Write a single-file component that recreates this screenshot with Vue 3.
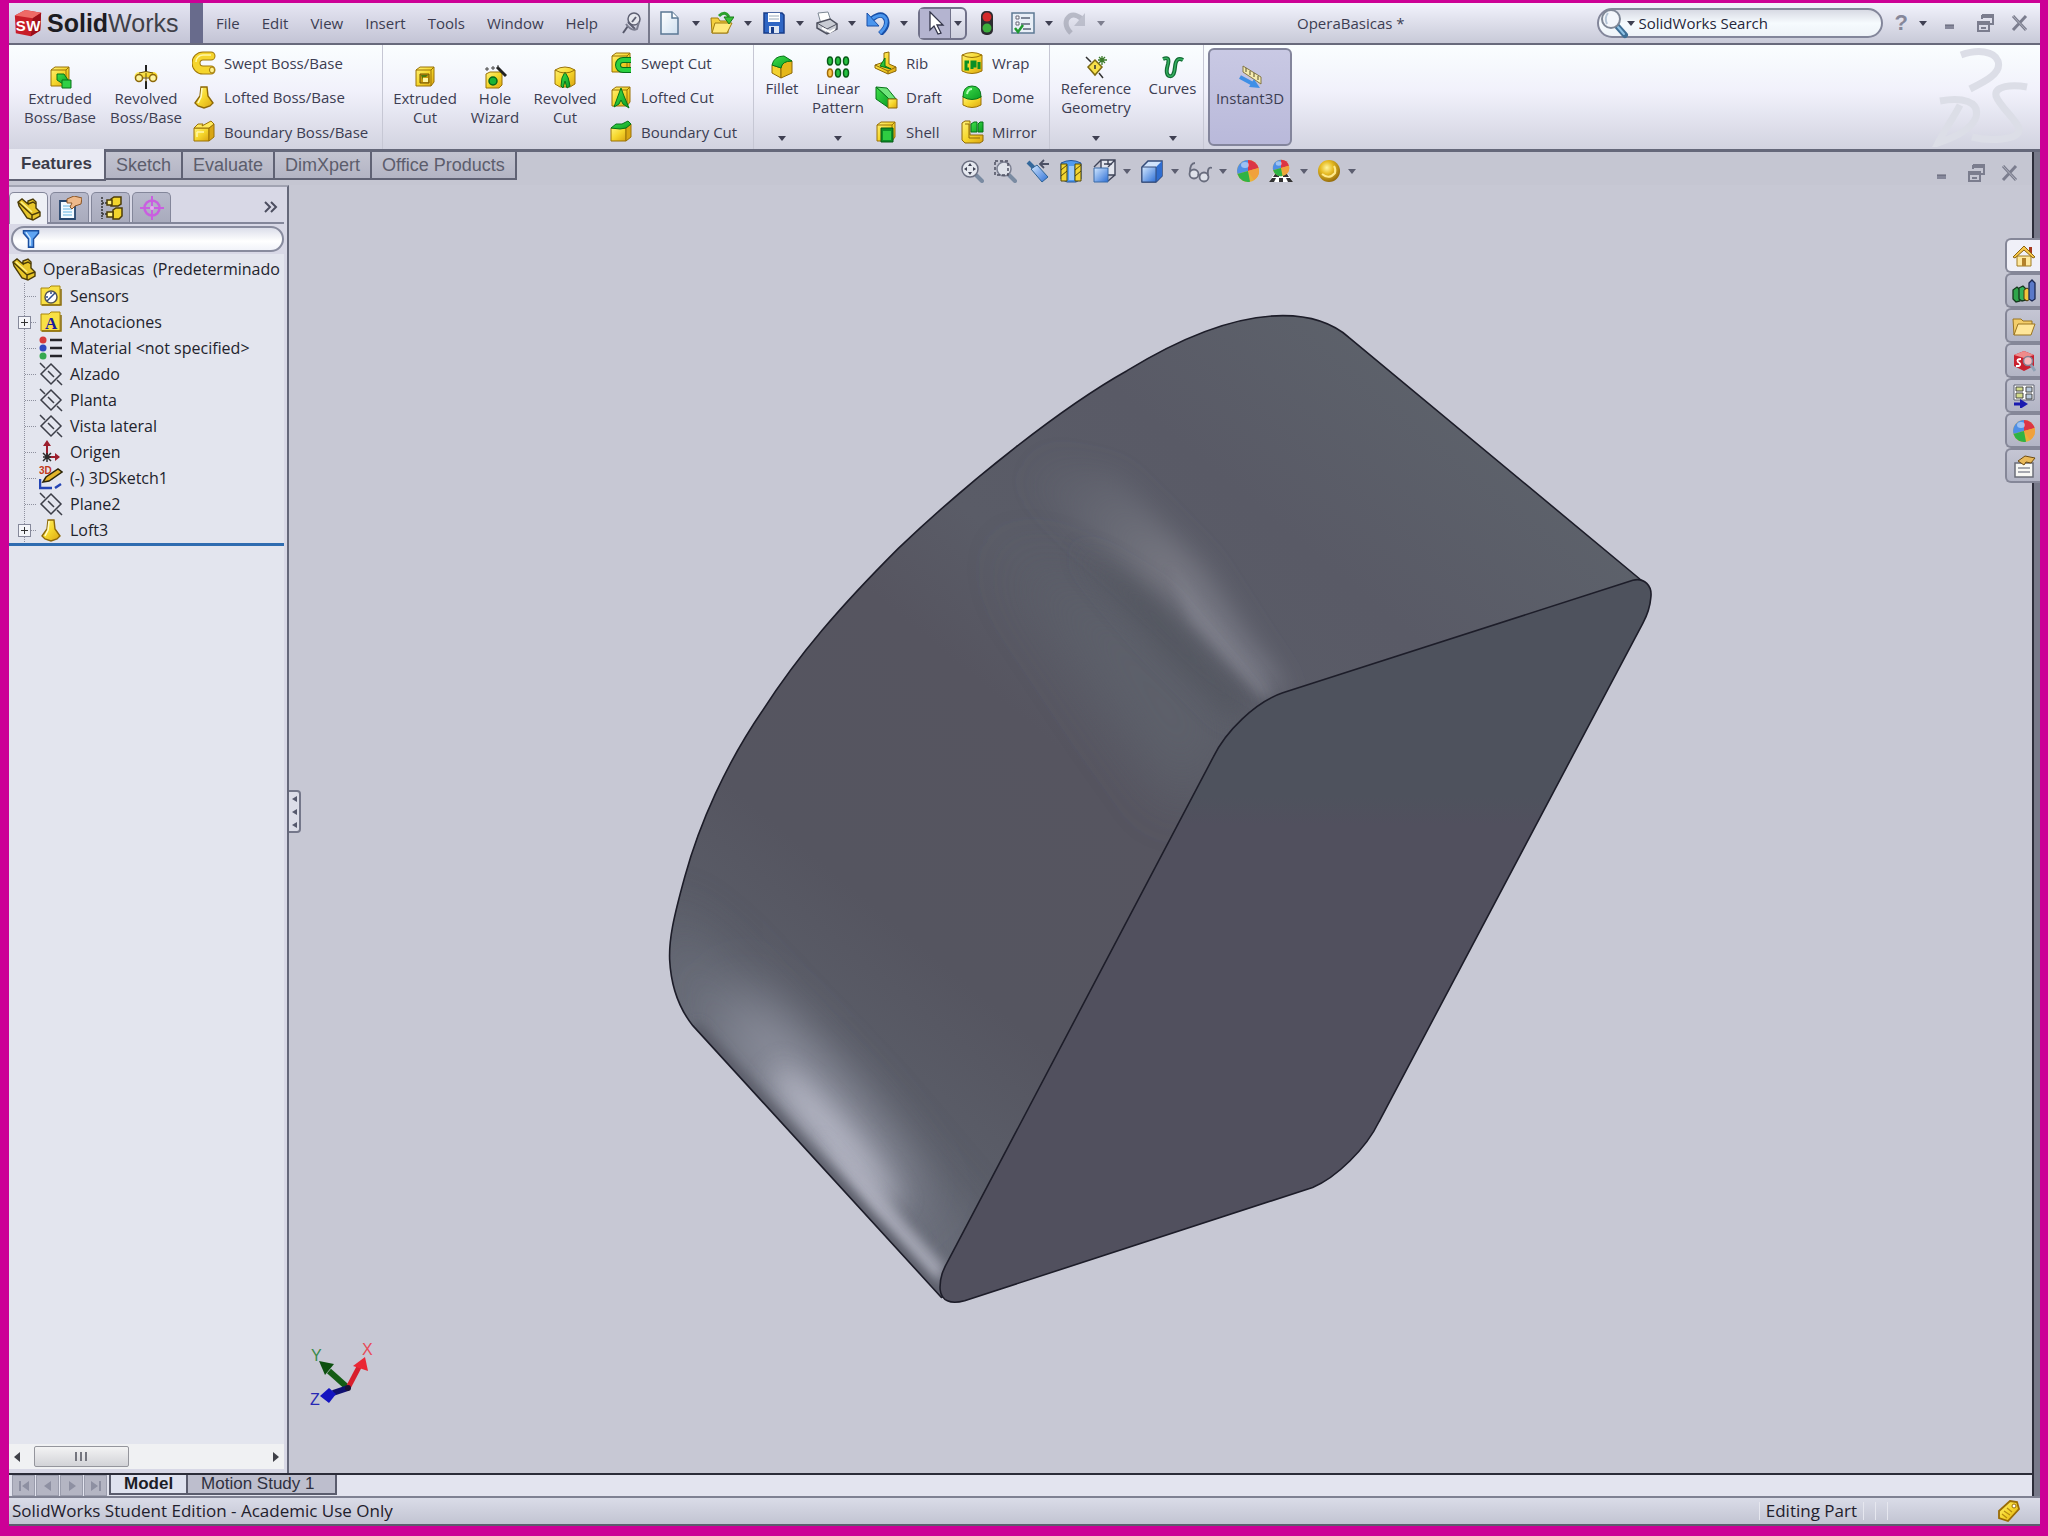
<template>
  <div class="desktop">
    <!-- Shared gradients -->
    <svg class="defs" width="0" height="0" aria-hidden="true">
      <defs>
        <linearGradient id="gold" x1="0" y1="0" x2="1" y2="1">
          <stop offset="0" stop-color="#fff27a" />
          <stop offset="0.5" stop-color="#f6d72c" />
          <stop offset="1" stop-color="#dba512" />
        </linearGradient>
        <linearGradient id="green" x1="0" y1="0" x2="1" y2="1">
          <stop offset="0" stop-color="#3fe04a" />
          <stop offset="1" stop-color="#0b9d25" />
        </linearGradient>
        <linearGradient id="blue" x1="0" y1="0" x2="1" y2="1">
          <stop offset="0" stop-color="#d3e8ff" />
          <stop offset="1" stop-color="#2d6fd6" />
        </linearGradient>
        <radialGradient id="goldBall" cx="0.4" cy="0.35" r="0.7">
          <stop offset="0" stop-color="#fff6a0" />
          <stop offset="0.4" stop-color="#e8bd25" />
          <stop offset="1" stop-color="#8e6406" />
        </radialGradient>
        <linearGradient id="page" x1="0" y1="0" x2="1" y2="1">
          <stop offset="0" stop-color="#ffffff" />
          <stop offset="1" stop-color="#cfe0f0" />
        </linearGradient>
      </defs>
    </svg>

    <div class="window">
      <!-- Title bar -->
      <header class="titlebar">
        <div class="brand">
          <svg class="brand-cube" viewBox="0 0 32 32" aria-hidden="true">
            <path d="M2 8L13 2l17 3-1 19-10 6-16-3z" fill="#c81e28" />
            <path d="M2 8L13 2l17 3-9 6z" fill="#ee6a66" />
            <path d="M21 11l9-6-1 19-10 6z" fill="#9c0f1a" />
            <text x="3" y="24" class="cube-letter">S</text>
            <text x="14" y="24" class="cube-letter">W</text>
          </svg>
          <span class="brand-name"><b>Solid</b>Works</span>
        </div>
        <nav class="menu">
          <button v-for="item in menus" :key="item" type="button">{{ item }}</button>
          <button type="button" class="pin" aria-label="Pin menu">
            <svg class="icon" viewBox="0 0 24 24" v-html="icons.pin"></svg>
          </button>
        </nav>

        <div class="quick">
          <template v-for="tool in quickTools" :key="tool.icon">
            <div v-if="tool.selected" class="tool selected">
              <button type="button" class="select-main" :aria-label="tool.label">
                <svg class="icon" viewBox="0 0 24 24" v-html="icons[tool.icon]"></svg>
              </button>
              <button type="button" class="select-drop" aria-label="Select options"><i class="caret"></i></button>
            </div>
            <button v-else type="button" class="tool" :class="{ faded: tool.faded }" :aria-label="tool.label">
              <svg class="icon" viewBox="0 0 24 24" v-html="icons[tool.icon]"></svg>
              <i v-if="tool.drop" class="caret"></i>
            </button>
          </template>
        </div>

        <h1 class="doc-title">OperaBasicas *</h1>

        <label class="search">
          <svg class="search-icon" viewBox="0 0 32 32" aria-hidden="true">
            <path d="M18 19l8 9" stroke="#3f6f96" stroke-width="6" stroke-linecap="round" />
            <path d="M19 20l6 7" stroke="#8fc3e6" stroke-width="2" stroke-linecap="round" />
            <circle cx="12" cy="12" r="9" fill="#f3f6fb" stroke="#7f8796" stroke-width="2" />
            <path d="M9 6q-4 5-1 11" fill="none" stroke="#b4c4d6" stroke-width="2" />
          </svg>
          <i class="caret"></i>
          <input v-model="search" type="text" aria-label="SolidWorks Search" />
        </label>

        <div class="window-controls">
          <button type="button" class="help" aria-label="Help">?</button>
          <button type="button" aria-label="Help options"><i class="caret"></i></button>
          <button v-for="c in controls" :key="c" type="button" :aria-label="c">
            <svg class="icon" viewBox="0 0 24 24" v-html="icons[c]"></svg>
          </button>
        </div>
      </header>

      <!-- Command manager -->
      <section class="ribbon">
        <div v-for="group in ribbon" :key="group.name" class="group" :class="group.name">
          <button v-for="b in group.large" :key="b.label" type="button" class="large"
            :class="{ dropdown: b.drop, active: b.active }">
            <svg class="icon" viewBox="0 0 24 24" v-html="icons[b.icon]"></svg>
            <span>{{ b.label }}</span>
            <i v-if="b.drop" class="caret"></i>
          </button>
          <div v-for="(col, i) in group.columns" :key="i" class="column">
            <button v-for="b in col" :key="b.label" type="button" class="small">
              <svg class="icon" viewBox="0 0 24 24" v-html="icons[b.icon]"></svg>
              <span>{{ b.label }}</span>
            </button>
          </div>
        </div>
        <svg class="watermark" viewBox="0 0 104 100" aria-hidden="true">
          <path d="M33 8C50 2 66 4 70 14C74 26 58 34 42 42" />
          <path d="M12 54C34 50 52 54 48 70C44 82 28 90 10 96C16 84 26 70 32 58" />
          <path d="M99 40C84 37 66 39 68 49C72 60 90 74 91 82C92 94 60 94 44 90" />
        </svg>
      </section>

      <div class="workspace">
        <div class="main">
          <nav class="tabs">
            <button v-for="tab in tabs" :key="tab" type="button" :class="{ active: tab === activeTab }"
              @click="activeTab = tab">{{ tab }}</button>
          </nav>

          <div class="body">
            <!-- Feature manager -->
            <aside class="panel">
              <div class="panel-tabs">
                <button v-for="(t, i) in panelTabs" :key="t.icon" type="button" :class="{ active: i === 0 }"
                  :aria-label="t.label">
                  <svg class="icon" viewBox="0 0 24 24" v-html="icons[t.icon]"></svg>
                </button>
                <button type="button" class="more" aria-label="Expand">
                  <svg viewBox="0 0 14 14" aria-hidden="true">
                    <path d="M1 2l5 5-5 5M7 2l5 5-5 5" fill="none" stroke="#4c4e60" stroke-width="2" />
                  </svg>
                </button>
              </div>
              <label class="filter">
                <svg class="icon" viewBox="0 0 24 24" v-html="icons.filter"></svg>
                <input v-model="filter" type="text" aria-label="Filter" />
              </label>
              <div class="tree">
                <div class="root">
                  <svg class="icon" viewBox="0 0 24 24" v-html="icons.part"></svg>
                  <span>OperaBasicas&nbsp; (Predeterminado</span>
                </div>
                <ul>
                  <li v-for="node in nodes" :key="node.label">
                    <span class="branch">
                      <button v-if="node.expandable" type="button" :aria-label="'Expand ' + node.label"></button>
                    </span>
                    <svg class="icon" viewBox="0 0 24 24" v-html="icons[node.icon]"></svg>
                    <span>{{ node.label }}</span>
                  </li>
                </ul>
              </div>
              <div class="scrollbar">
                <button type="button" class="arrow left" aria-label="Scroll left"></button>
                <div class="track">
                  <div class="thumb"><i></i><i></i><i></i></div>
                </div>
                <button type="button" class="arrow right" aria-label="Scroll right"></button>
              </div>
            </aside>

            <!-- Graphics area -->
            <main class="viewport">
              <svg class="model" viewBox="289 186 1744 1287" aria-label="Loft3">
                <defs>
                  <linearGradient id="side" gradientUnits="userSpaceOnUse" x1="1250" y1="150" x2="250" y2="1350">
                    <stop offset="0" stop-color="#5d626b" />
                    <stop offset="0.22" stop-color="#595a66" />
                    <stop offset="0.4" stop-color="#5a5c67" />
                    <stop offset="0.52" stop-color="#565560" />
                    <stop offset="0.75" stop-color="#555560" />
                    <stop offset="0.9" stop-color="#5b5e69" />
                    <stop offset="1" stop-color="#686b78" />
                  </linearGradient>
                  <linearGradient id="streak" gradientUnits="userSpaceOnUse" x1="590" y1="260" x2="950" y2="610">
                    <stop offset="0" stop-color="#6a6d78" stop-opacity="0" />
                    <stop offset="0.5" stop-color="#74757f" />
                    <stop offset="0.85" stop-color="#777884" />
                    <stop offset="1" stop-color="#92939f" />
                  </linearGradient>
                  <linearGradient id="front" x1="0" y1="0" x2="0" y2="1">
                    <stop offset="0.3" stop-color="#4e525d" />
                    <stop offset="0.34" stop-color="#51505e" />
                  </linearGradient>
                  <filter id="tight" filterUnits="userSpaceOnUse" x="-500" y="-1000" width="3500" height="3500">
                    <feGaussianBlur stdDeviation="9" />
                  </filter>
                  <filter id="soft" filterUnits="userSpaceOnUse" x="-500" y="-1000" width="3500" height="3500">
                    <feGaussianBlur stdDeviation="20" />
                  </filter>
                  <filter id="softer" filterUnits="userSpaceOnUse" x="-500" y="-1000" width="3500" height="3500">
                    <feGaussianBlur stdDeviation="42" />
                  </filter>
                  <clipPath id="body">
                    <path :d="outline" />
                  </clipPath>
                </defs>
                <g transform="translate(640 290) scale(0.6633)">
                  <path :d="outline" fill="url(#side)" />
                  <g clip-path="url(#body)">
                    <path d="M560 400L760 500 900 660 820 780 720 640z" fill="#5d606b" filter="url(#softer)" />
                    <path d="M540 220L720 280 850 420 975 615 880 555 750 435 600 310z" fill="url(#streak)"
                      filter="url(#soft)" />
                    <path d="M800 420L955 612 935 612 830 500z" fill="#868793" filter="url(#tight)" opacity="0.6" />
                    <path d="M660 390L780 465 920 630 895 645 790 540z" fill="#50525c" filter="url(#soft)"
                      opacity="0.7" />
                    <path d="M20 930L110 1000 330 1230 500 1430 450 1540 60 1140z" fill="#6c6f7b"
                      filter="url(#softer)" opacity="0.9" />
                    <ellipse cx="270" cy="1225" rx="210" ry="40" transform="rotate(49 270 1225)" fill="#9a9caa"
                      filter="url(#softer)" />
                    <ellipse cx="295" cy="1280" rx="140" ry="22" transform="rotate(49 295 1280)" fill="#bebfcd"
                      filter="url(#soft)" opacity="0.9" />
                    <path d="M270 1270L350 1350 460 1475 446 1500 350 1395z" fill="#b4b5c3" filter="url(#tight)"
                      opacity="0.8" />
                    <path d="M80 1112L455 1525" stroke="#585a66" stroke-width="22" filter="url(#tight)" />
                  </g>
                  <path :d="outline" class="edge" fill="none" />
                  <path :d="face" class="edge" fill="url(#front)" />
                </g>
              </svg>

              <div class="view-tools">
                <button v-for="v in viewTools" :key="v.icon" type="button" :aria-label="v.label">
                  <svg class="icon" viewBox="0 0 24 24" v-html="icons[v.icon]"></svg>
                  <i v-if="v.drop" class="caret"></i>
                </button>
              </div>
              <div class="doc-controls">
                <button v-for="c in controls" :key="c" type="button" :aria-label="c">
                  <svg class="icon" viewBox="0 0 24 24" v-html="icons[c]"></svg>
                </button>
              </div>

              <div class="task-pane">
                <button v-for="(t, i) in taskTabs" :key="t.icon" type="button" :class="{ active: i === 0 }"
                  :aria-label="t.label">
                  <svg class="icon" viewBox="0 0 24 24" v-html="icons[t.icon]"></svg>
                </button>
              </div>

              <button type="button" class="splitter" aria-label="Collapse panel"><i></i><i></i><i></i></button>

              <svg class="triad" viewBox="0 0 80 80" aria-hidden="true">
                <path d="M43 53L24 36" stroke="#145c14" stroke-width="6" />
                <path d="M14 26l15 3-9 11z" fill="#0d5010" />
                <path d="M43 53L54 32" stroke="#d81f2c" stroke-width="5" />
                <path d="M60 22l3 14-15-5z" fill="#ea2734" />
                <path d="M43 53L28 58" stroke="#101070" stroke-width="6" />
                <path d="M15 61l9-8 7 6-7 9z" fill="#1414c0" />
                <circle cx="43" cy="53" r="3" fill="#1a1238" />
                <text x="6" y="26" fill="#3a8a4a">Y</text>
                <text x="57" y="20" fill="#e84a58">X</text>
                <text x="5" y="70" fill="#2828b4">Z</text>
              </svg>
            </main>
          </div>
        </div>
      </div>

      <!-- Model / motion study tabs -->
      <div class="sheet-bar">
        <div class="sheet-nav">
          <button v-for="n in sheetNav" :key="n.label" type="button" :aria-label="n.label">
            <svg viewBox="0 0 16 16"><path :d="n.path" /></svg>
          </button>
        </div>
        <button type="button" class="sheet active">Model</button>
        <button type="button" class="sheet">Motion Study 1</button>
      </div>

      <footer class="status">
        <span class="edition">SolidWorks Student Edition - Academic Use Only</span>
        <span class="mode">Editing Part</span>
        <span class="cell"></span>
        <span class="cell"></span>
        <button type="button" class="tag" aria-label="Tags">
          <svg class="icon" viewBox="0 0 24 24" v-html="icons.tag"></svg>
        </button>
      </footer>
    </div>
  </div>
</template>

<script setup>
import { ref } from 'vue'

const search = ref('SolidWorks Search')
const filter = ref('')
const activeTab = ref('Features')

const menus = ['File', 'Edit', 'View', 'Insert', 'Tools', 'Window', 'Help']
const tabs = ['Features', 'Sketch', 'Evaluate', 'DimXpert', 'Office Products']
const controls = ['minimize', 'restore', 'close']

const quickTools = [
  { icon: 'newDoc', label: 'New', drop: true },
  { icon: 'open', label: 'Open', drop: true },
  { icon: 'save', label: 'Save', drop: true },
  { icon: 'print', label: 'Print', drop: true },
  { icon: 'undo', label: 'Undo', drop: true },
  { icon: 'cursor', label: 'Select', selected: true },
  { icon: 'traffic', label: 'Rebuild' },
  { icon: 'options', label: 'Options', drop: true },
  { icon: 'redo', label: 'Redo', drop: true, faded: true }
]

const ribbon = [
  {
    name: 'boss',
    large: [
      { icon: 'extrude', label: 'Extruded Boss/Base' },
      { icon: 'revolve', label: 'Revolved Boss/Base' }
    ],
    columns: [[
      { icon: 'swept', label: 'Swept Boss/Base' },
      { icon: 'loft', label: 'Lofted Boss/Base' },
      { icon: 'boundary', label: 'Boundary Boss/Base' }
    ]]
  },
  {
    name: 'cut',
    large: [
      { icon: 'extrudeCut', label: 'Extruded Cut' },
      { icon: 'hole', label: 'Hole Wizard' },
      { icon: 'revolveCut', label: 'Revolved Cut' }
    ],
    columns: [[
      { icon: 'sweptCut', label: 'Swept Cut' },
      { icon: 'loftCut', label: 'Lofted Cut' },
      { icon: 'boundaryCut', label: 'Boundary Cut' }
    ]]
  },
  {
    name: 'applied',
    large: [
      { icon: 'fillet', label: 'Fillet', drop: true },
      { icon: 'pattern', label: 'Linear Pattern', drop: true }
    ],
    columns: [
      [
        { icon: 'rib', label: 'Rib' },
        { icon: 'draft', label: 'Draft' },
        { icon: 'shell', label: 'Shell' }
      ],
      [
        { icon: 'wrap', label: 'Wrap' },
        { icon: 'dome', label: 'Dome' },
        { icon: 'mirror', label: 'Mirror' }
      ]
    ]
  },
  {
    name: 'reference',
    large: [
      { icon: 'refGeometry', label: 'Reference Geometry', drop: true },
      { icon: 'curves', label: 'Curves', drop: true }
    ],
    columns: []
  },
  { name: 'instant', large: [{ icon: 'instant', label: 'Instant3D', active: true }], columns: [] }
]

const panelTabs = [
  { icon: 'part', label: 'FeatureManager' },
  { icon: 'property', label: 'PropertyManager' },
  { icon: 'config', label: 'ConfigurationManager' },
  { icon: 'target', label: 'DimXpertManager' }
]

const nodes = [
  { icon: 'sensors', label: 'Sensors' },
  { icon: 'annotations', label: 'Anotaciones', expandable: true },
  { icon: 'material', label: 'Material <not specified>' },
  { icon: 'plane', label: 'Alzado' },
  { icon: 'plane', label: 'Planta' },
  { icon: 'plane', label: 'Vista lateral' },
  { icon: 'origin', label: 'Origen' },
  { icon: 'sketch3d', label: '(-) 3DSketch1' },
  { icon: 'plane', label: 'Plane2' },
  { icon: 'loft', label: 'Loft3', expandable: true }
]

const viewTools = [
  { icon: 'zoomFit', label: 'Zoom to fit' },
  { icon: 'zoomArea', label: 'Zoom to area' },
  { icon: 'prevView', label: 'Previous view' },
  { icon: 'section', label: 'Section view' },
  { icon: 'orientation', label: 'View orientation', drop: true },
  { icon: 'display', label: 'Display style', drop: true },
  { icon: 'glasses', label: 'Hide/show items', drop: true },
  { icon: 'ball', label: 'Edit appearance' },
  { icon: 'scene', label: 'Apply scene', drop: true },
  { icon: 'goldBall', label: 'View settings', drop: true }
]

const taskTabs = [
  { icon: 'home', label: 'Resources' },
  { icon: 'library', label: 'Design library' },
  { icon: 'folder', label: 'File explorer' },
  { icon: 'swSearch', label: 'Search' },
  { icon: 'palette', label: 'View palette' },
  { icon: 'ball', label: 'Appearances' },
  { icon: 'customProps', label: 'Custom properties' }
]

const sheetNav = [
  { label: 'First', path: 'M3 3h2v10H3zM13 3v10L6 8z' },
  { label: 'Previous', path: 'M11 3v10L4 8z' },
  { label: 'Next', path: 'M5 3v10l7-5z' },
  { label: 'Last', path: 'M11 3h2v10h-2zM3 3v10l7-5z' }
]

// Loft body
const outline = 'M1513 440L1070 72C1045 50 1010 39 970 39C900 39 820 70 735 122C640 175 500 285 390 390C300 480 240 550 185 635C130 715 90 805 68 885C50 950 44 980 45 1010C47 1050 60 1085 80 1110L455 1520L500 1500L1000 700L1500 460z'
const face = 'M970 608L1498 438C1515 434 1528 446 1525 465C1524 478 1520 490 1513 503L1115 1255C1096 1295 1050 1340 1015 1354L490 1525C468 1531 455 1525 453 1508C452 1490 458 1477 466 1463L865 705C883 667 928 622 970 608z'

const box = '<path d="M3 5l4-3h14v15l-3 4H3z" fill="url(#gold)" stroke="#9a7207"/><path d="M3 5h15v16M18 5l3-3" fill="none" stroke="#9a7207"/>'
const bell = '<path d="M9 2h6l1 9 5 7-3 3-6 2-6-2-3-3 5-7z" fill="url(#gold)" stroke="#8d6808" stroke-width="1.4"/><path d="M10 3l-1 9-3 6" stroke="#fffbc4" stroke-width="1.6" fill="none"/>'
const folder = '<path d="M2 4h8l2-2h9v19H2z" fill="#f8e045" stroke="#a8860c"/><path d="M3 21h19V5" fill="none" stroke="#8a6c08" stroke-width="1.5"/>'
const openBox = '<path d="M2 8h15v13H2z" fill="url(#gold)" stroke="#9a7207"/><path d="M17 8l5-4v13l-5 4z" fill="#d9a614" stroke="#9a7207"/>'
const ball = '<circle cx="12" cy="12" r="11" fill="#e8b23a"/><path d="M12 12L12 1A11 11 0 0 0 1.500 15z" fill="#4f8fe6"/><path d="M12 12L12 1A11 11 0 0 1 22.600 9z" fill="#dc3545"/><path d="M12 12L1.500 15A11 11 0 0 0 14 22.800z" fill="#2fb344"/><path d="M12 12L22.600 9A11 11 0 0 1 18 21z" fill="#f0a13c"/><ellipse cx="9" cy="6" rx="4" ry="3" fill="#fff" opacity="0.450"/>'

const icons = {
  pin: '<path d="M8 15l-5 7" stroke="#55576a" stroke-width="2"/><circle cx="14" cy="8" r="6" fill="#e6e7ee" stroke="#5d5f72" stroke-width="1.500"/><path d="M8 11l7 7M16 6l-4 5" stroke="#5d5f72" stroke-width="2" fill="none"/><path d="M6 13q6 8 11 5l2-7" fill="none" stroke="#7b7d8f" stroke-width="2"/>',
  newDoc: '<path d="M3 1h11l6 6v16H3z" fill="url(#page)" stroke="#5b7894" stroke-width="1.500"/><path d="M14 1v6h6" fill="#fff" stroke="#5b7894" stroke-width="1.500"/>',
  open: '<path d="M1 7h7l2 3h8v12H2z" fill="#f4cf3e" stroke="#a07d10"/><path d="M5 12h17l-5 10H2z" fill="#ffe97c" stroke="#a07d10"/><path d="M9 5q6-6 10 1" fill="none" stroke="#2ca02c" stroke-width="3"/><path d="M14 6h10l-5 7z" fill="#38c038" stroke="#1a7a1a"/>',
  save: '<path d="M2 2h18l2 2v18H2z" fill="#2f66c4" stroke="#183c88" stroke-width="1.500"/><path d="M6 2h12v9H6z" fill="#fff"/><path d="M7 5h10M7 8h10" stroke="#9ab"/><path d="M7 15h10v7H7z" fill="#dfe7f3"/><path d="M9 16h3v6H9z" fill="#183c88"/>',
  print: '<path d="M4 2l10-1 3 9-10 3z" fill="#fff" stroke="#7d8894"/><path d="M3 12l13-4 7 5v5l-10 5-10-6z" fill="#c9ccd4" stroke="#4d505e" stroke-width="1.500"/><path d="M3 12l10 6 10-5M13 18v5" fill="none" stroke="#4d505e"/><path d="M8 17l8 4 5-3" fill="none" stroke="#fff" stroke-width="2"/>',
  undo: '<path d="M6 8q10-8 14 0 3 7-6 15" fill="none" stroke="#184fa8" stroke-width="5.500"/><path d="M6 8q10-7 14 0 2 7-6 14" fill="none" stroke="#4b96ee" stroke-width="3"/><path d="M1 2v13h12z" fill="#4b96ee" stroke="#184fa8"/>',
  redo: '<path d="M19 8Q9 0 4 8q-3 7 4 14" fill="none" stroke="#9a9dab" stroke-width="5"/><path d="M22 2v13H11z" fill="#a7aab8"/>',
  cursor: '<path d="M7 1v18l4-4 4 8 3-1-4-8h6z" fill="#fff" stroke="#33354a" stroke-width="1.300"/>',
  traffic: '<rect x="4" y="0" width="12" height="24" rx="5" fill="#2c2c30"/><circle cx="10" cy="6" r="4.500" fill="#d42a2a"/><circle cx="10" cy="17" r="4.500" fill="#3cae3c"/>',
  options: '<path d="M1 2h22v20H1z" fill="#e9eff7" stroke="#5d7a94" stroke-width="1.500"/><path d="M5 5h3v3H5zM5 11h3v3H5z" fill="#fff" stroke="#667"/><path d="M10 7h9M10 13h9M12 18h8" stroke="#5b6478" stroke-width="1.500"/><path d="M4 17l3 4 5-7" fill="none" stroke="#1f9a2f" stroke-width="2.500"/>',
  minimize: '<path d="M7 14h9v4H7z" fill="#85879a"/><path d="M7 14h9" stroke="#5f6172"/>',
  restore: '<path d="M9 4h11v9h-4M9 4v4M9 6h11M5 11h11v9H5zM5 13h11M8 17h5" fill="none" stroke="#7b7d8e" stroke-width="2"/>',
  close: '<path d="M5 5l13 14M18 5L5 19" stroke="#7b7d8e" stroke-width="3"/><path d="M5 5l13 14" stroke="#b0b2be"/>',
  extrude: box + '<path d="M9 9h7l4 6-5 4-6-4z" fill="url(#green)" stroke="#067318"/><path d="M14 15h9v8h-9z" fill="#2fd045" stroke="#067318"/>',
  revolve: '<path d="M12 0v7M12 16v8" stroke="#222" stroke-width="2"/><path d="M5 7h14a4 4 0 0 1 0 9q-4-4-7-4t-7 4a4 4 0 0 1 0-9z" fill="url(#gold)"/><circle cx="5" cy="13" r="3.500" fill="#fdf4a0" stroke="#8d6808" stroke-width="1.500"/><circle cx="19" cy="13" r="3.500" fill="#fdf4a0" stroke="#8d6808" stroke-width="1.500"/><path d="M5 8q7-3 14 0M9 13h6M12 8v9" fill="none" stroke="#6b5005"/>',
  swept: '<path d="M19 5H11a7 7 0 0 0 0 14h8" fill="none" stroke="#a0780a" stroke-width="9" stroke-linecap="round"/><path d="M19 5H11a7 7 0 0 0 0 14h8" fill="none" stroke="#f5d52e" stroke-width="7" stroke-linecap="round"/><path d="M19 4H11a7 7 0 0 0-7 7" fill="none" stroke="#fff8a8" stroke-width="1.500"/><ellipse cx="20" cy="19" rx="2.500" ry="3" fill="#fff08a" stroke="#a0780a"/>',
  loft: bell,
  boundary: openBox + '<path d="M2 8l4-4h5l-1 2 9-5 3 3-5 4z" fill="#ffe95e" stroke="#9a7207"/><path d="M5 12h7M5 12v5" fill="none" stroke="#fff8a8" stroke-width="1.500"/>',
  extrudeCut: box + '<path d="M7 9h9v9H7z" fill="#c99b10" stroke="#6f5204"/><path d="M8 10h7l-2 2h-3v3z" fill="#4a7a10"/><path d="M10 13h5v4h-5z" fill="#fff7a0"/>',
  hole: '<path d="M3 9l4-2h12v13l-3 3H3z" fill="url(#gold)" stroke="#9a7207"/><circle cx="10" cy="16" r="4" fill="#19b435" stroke="#06651a" stroke-width="1.500"/><path d="M14 2l9 9" stroke="#222" stroke-width="3"/><path d="M4 2v4M2 4h4M10 1v4M8 3h4M15 0v3" stroke="#444"/>',
  revolveCut: '<path d="M2 5q10-6 20 0v14l-5 3H7l-5-3z" fill="url(#gold)" stroke="#9a7207"/><path d="M8 21q0-9 4-14 4 5 5 14l-3 2-2-7-2 7z" fill="url(#green)" stroke="#067318"/><path d="M2 5q10 6 20 0" fill="none" stroke="#9a7207"/>',
  sweptCut: box + '<path d="M22 9h-8a5 5 0 0 0 0 10h8" fill="none" stroke="#05701a" stroke-width="6"/><path d="M22 9h-8a5 5 0 0 0 0 10h8" fill="none" stroke="#2bd040" stroke-width="4"/>',
  loftCut: box + '<path d="M12 3l3 8 5 12-6-4-2-4-2 4-5 3 4-11z" fill="url(#green)" stroke="#067318"/>',
  boundaryCut: openBox + '<path d="M2 8l5-4h6l6-3 3 3-5 4-6 1z" fill="url(#green)" stroke="#067318"/>',
  fillet: '<path d="M2 10l9 3v10l-9-5z" fill="#f3d230" stroke="#8d6808"/><path d="M11 13q1-8 11-7v12l-11 5z" fill="#e5b71a" stroke="#8d6808"/><path d="M2 10Q4 1 14 1l8 5q-10 0-11 7z" fill="url(#green)" stroke="#067318"/>',
  pattern: '<g fill="#25c040" stroke="#075a17" stroke-width="1.500"><ellipse cx="4" cy="6" rx="2.500" ry="4"/><ellipse cx="12" cy="6" rx="2.500" ry="4"/><ellipse cx="20" cy="6" rx="2.500" ry="4"/><ellipse cx="12" cy="18" rx="2.500" ry="4"/><ellipse cx="20" cy="18" rx="2.500" ry="4"/></g><ellipse cx="4" cy="18" rx="2.500" ry="4" fill="#f8c84a" stroke="#a06a08" stroke-width="1.500"/>',
  rib: '<path d="M10 2l5-1v12l7 3v4l-8 3-13-6v-3l9-3z" fill="url(#gold)" stroke="#8d6808"/><path d="M6 15l5-8v8l6 3z" fill="url(#green)" stroke="#067318"/><path d="M1 14l13 6 8-4M14 20v3" fill="none" stroke="#8d6808"/>',
  draft: '<path d="M2 2l11 1 9 11h-7z" fill="#6fe47a" stroke="#067318"/><path d="M2 2l13 12v9L2 14z" fill="url(#green)" stroke="#067318"/><path d="M14 14h9v9h-9z" fill="url(#gold)" stroke="#8d6808"/>',
  shell: box + '<path d="M7 8h12v14H7z" fill="#0d8f28" stroke="#055a14"/><path d="M9 11h8v9H9z" fill="#2fcc42"/>',
  wrap: '<path d="M2 4q10-5 20 0v16q-10 5-20 0z" fill="url(#gold)" stroke="#9a7207"/><path d="M2 4q10 5 20 0" fill="none" stroke="#9a7207"/><path d="M9 11H6v7h3M12 18v-7h3v4h-2M19 11v7" fill="none" stroke="#0a8f25" stroke-width="3"/>',
  dome: '<path d="M3 11h18v9q-9 5-18 0z" fill="url(#gold)" stroke="#9a7207"/><path d="M3 12Q3 1 12 1t9 11q-9 5-18 0z" fill="url(#green)" stroke="#067318"/><path d="M7 9q1-5 5-5" stroke="#b6ffba" stroke-width="2" fill="none"/>',
  mirror: '<path d="M2 3l3-2h5v14h13v6l-3 2H5l-3-3z" fill="url(#gold)" stroke="#8d6808"/><path d="M5 4h4v14h11" fill="none" stroke="#8d6808"/><path d="M11 4l3-2h3v10h-6zM18 4l2-2h3v10h-5z" fill="url(#green)" stroke="#067318"/>',
  refGeometry: '<path d="M11 5l7 7-7 8-7-8z" fill="#f7e04a" stroke="#7d6a12" stroke-width="1.500"/><path d="M11 10v4M2 2l5 5M15 18l4 5" stroke="#333" stroke-width="1.500"/><path d="M18 1v9M14 5h9M15 2l6 6M21 2l-6 6" stroke="#3b7a2a" stroke-width="1.300"/>',
  curves: '<path d="M2 4q7-3 5 5-3 10 1 12 5 2 6-9 1-11 8-7" fill="none" stroke="#126b34" stroke-width="4"/><path d="M2 4q7-3 5 5-3 10 1 12 5 2 6-9 1-11 8-7" fill="none" stroke="#35b060" stroke-width="1.500"/>',
  instant: '<path d="M5 1l18 11v7L5 7z" fill="#f6ecb0" stroke="#837645"/><path d="M8 3v4M12 6v4M16 8v4M20 11v4" stroke="#544c2c"/><path d="M2 12l13 7" stroke="#3f8fe6" stroke-width="4"/><path d="M22 23l-11-1 5-8z" fill="#3f8fe6"/>',
  part: '<path d="M1 5l4-3 6 5V4l5-2 3 3v6l4 4v4l-7 4-6-2L2 9z" fill="#e8c62a" stroke="#4c3c08" stroke-width="1.400"/><path d="M1 5l14 13 8-3M15 18v5M11 7l5-2 3 2" fill="none" stroke="#4c3c08" stroke-width="1.400"/><path d="M4 5l11 10" stroke="#fff388" stroke-width="1.500"/>',
  property: '<path d="M2 5h15v18H2z" fill="#f4faff" stroke="#27466e" stroke-width="1.800"/><path d="M5 10h9M5 13h9M5 16h9M5 19h9" stroke="#63b3e0"/><path d="M9 3l7-3 8 2-1 6-6 2-3 3-2-2 2-4H9z" fill="#eeb98a" stroke="#8a5526"/>',
  config: '<path d="M3 1v22M3 7h6M3 18h6" stroke="#333" stroke-width="1.500" stroke-dasharray="2 1"/><path d="M12 3l3-2h7v7l-3 2h-7zM14 14l3-2h6v8l-3 3h-6z" fill="#f1d42c" stroke="#4c3c08" stroke-width="1.500"/><path d="M8 4h5v5H8zM8 16h6v5H8z" fill="#fff180" stroke="#4c3c08" stroke-width="1.500"/>',
  target: '<circle cx="12" cy="12" r="7.500" fill="none" stroke="#c95fe0" stroke-width="2.500"/><path d="M12 0v24M0 12h24" stroke="#c95fe0" stroke-width="2"/><circle cx="12" cy="12" r="2" fill="#e9a8f4"/>',
  filter: '<path d="M3 2h18v3l-6 7v10H9V12L3 5z" fill="#5fa4f2" stroke="#1b4e9e" stroke-width="1.800"/><path d="M6 4l5 7v9" stroke="#d8ecff" stroke-width="1.500" fill="none"/>',
  sensors: folder + '<circle cx="12" cy="13" r="6" fill="#fff" stroke="#555" stroke-width="1.500"/><path d="M8 17l4-4 4-4M12 8v2M7 13h2" stroke="#2c4c8c" stroke-width="1.500"/>',
  annotations: folder + '<text x="6" y="19" font-family="Liberation Serif, serif" font-weight="bold" font-size="17" fill="#1c1c9c">A</text>',
  material: '<circle cx="4" cy="4" r="3.500" fill="#d63a3a"/><circle cx="4" cy="12" r="3.500" fill="#3048c0"/><circle cx="4" cy="20" r="3.500" fill="#35a850"/><path d="M11 4h12M11 12h12M11 20h12" stroke="#25252b" stroke-width="2.500"/>',
  plane: '<path d="M12 2l10 10-10 10L2 12z" fill="none" stroke="#3c3e48" stroke-width="1.500"/><path d="M1 1l5 5M9 9l6 6M18 18l5 5" stroke="#3c3e48" stroke-width="1.500"/>',
  origin: '<path d="M8 17V3M8 17h12" stroke="#9c1f2e" stroke-width="2"/><path d="M8 0l4 6H4zM21 17l-5-4v8z" fill="#9c1f2e"/><path d="M4 13l8 8M12 13l-8 8M4 17h8M8 13v9" stroke="#2b2b2b" stroke-width="1.500"/>',
  sketch3d: '<text x="0" y="8" font-family="Liberation Sans, sans-serif" font-weight="bold" font-size="10" fill="#c23a1a">3D</text><path d="M1 13v9h12M16 22l6-4M8 12h6" stroke="#2344b4" stroke-width="2.500" fill="none"/><path d="M4 16l3-5L19 3l4 3-13 9z" fill="#e3b52a" stroke="#2c2508" stroke-width="1.500"/>',
  zoomFit: '<path d="M15 15l7 7" stroke="#7a8ba2" stroke-width="4" stroke-linecap="round"/><circle cx="10" cy="10" r="8" fill="#e6e9f0" stroke="#6a6e80" stroke-width="1.500"/><path d="M10 4l2 3H8zM10 16l2-3H8zM4 10l3-2v4zM16 10l-3-2v4z" fill="#3f4254"/>',
  zoomArea: '<path d="M15 15l7 7" stroke="#7a8ba2" stroke-width="4" stroke-linecap="round"/><circle cx="11" cy="10" r="7" fill="#dfe2ea" stroke="#7b7f90" stroke-width="1.500"/><path d="M2 2h13v14H2z" fill="none" stroke="#4c4f60" stroke-width="1.500" stroke-dasharray="3 2"/>',
  prevView: '<path d="M2 3l6 6" stroke="#35699c" stroke-width="4"/><path d="M5 10l6-4 11 12-6 5z" fill="url(#blue)" stroke="#2e6394"/><path d="M23 5h-8M18 1l-4 4 4 4" fill="none" stroke="#4b5064" stroke-width="1.800"/>',
  section: '<path d="M2 4q10-5 20 0v16l-5 3H8l-6-3z" fill="#4f9aee" stroke="#20549c"/><path d="M10 7h5v14h-5z" fill="#9cc8f8"/><path d="M2 5h6v17H2zM16 5h6v17h-6z" fill="#f4d632" stroke="#554808"/><path d="M2 11l6-5M2 17l6-5M16 11l6-5M16 17l6-5" stroke="#554808"/>',
  orientation: '<path d="M9 1h14v15H9zM2 8l7-7M16 8l7-7M16 1v5M12 5h8M16 22l7-6" fill="#e3e6ee" stroke="#3f4458" stroke-width="1.400"/><path d="M2 9h14v14H2z" fill="url(#blue)" stroke="#3a6aa6"/>',
  display: '<path d="M2 8l6-6h14v15l-6 6H2z" fill="#cfe2fb" stroke="#324a78" stroke-width="1.500"/><path d="M16 8l6-6v15l-6 6z" fill="#2f6dd0"/><path d="M2 8h14v15H2z" fill="url(#blue)" stroke="#324a78"/>',
  glasses: '<circle cx="6" cy="15" r="4.500" fill="#dfe2ea" stroke="#696d7e" stroke-width="1.800"/><circle cx="16" cy="18" r="4.500" fill="#dfe2ea" stroke="#696d7e" stroke-width="1.800"/><path d="M2 13Q2 4 7 4M20 17q-1-10 4-8M10 15l2 2" fill="none" stroke="#696d7e" stroke-width="1.800"/>',
  ball,
  scene: '<path d="M0 23l5-8h14l5 8z" fill="#fff"/><path d="M0 23l3-4h4l-2 4zM10 23v-4h4v4zM17 19h4l3 4h-5zM4 18l2-3h4v3zM14 18v-3h4l2 3z" fill="#333"/><g transform="translate(3 0) scale(0.750)">' + ball + '</g>',
  goldBall: '<circle cx="12" cy="12" r="11" fill="url(#goldBall)"/><path d="M5 15q7 6 13-1 1-4-1-7" fill="none" stroke="#ffe98a" stroke-width="2"/>',
  home: '<path d="M5 12h14v10H5z" fill="#ffe9a0" stroke="#a07a20"/><path d="M17 3h3v7h-3z" fill="#a5371c"/><path d="M1 13L12 2l11 11-2 1-9-8-9 8z" fill="#f7c64a" stroke="#8a6412"/><path d="M10 14h4v8h-4z" fill="#b3812c"/>',
  library: '<path d="M1 11l4-3 3 3v11l-4 1-3-3z" fill="#2fa54a" stroke="#16381e" stroke-width="1.300"/><path d="M7 9l4-2 3 3v11l-4 1-3-2z" fill="#33b35a" stroke="#16381e" stroke-width="1.300"/><path d="M12 11l3-2 3 2v9l-3 2-3-2z" fill="#f2c53c" stroke="#4a3508"/><path d="M17 4l3-3 3 3v16l-3 2-3-2z" fill="#5a78c8" stroke="#1b2752" stroke-width="1.300"/>',
  folder: '<path d="M1 5h8l2 2h9v5H8L2 21z" fill="#f3cd6a" stroke="#9a7420"/><path d="M6 10h17l-4 11H2z" fill="#ffe69a" stroke="#9a7420"/>',
  swSearch: '<path d="M2 6l10-4 10 4v11l-10 5-10-5z" fill="#c9202e"/><path d="M2 6l10-4 10 4-10 3z" fill="#ef8b8b"/><path d="M9 10q-5 0-3 3 4 2 1 4H4" stroke="#fff" stroke-width="1.800" fill="none"/><circle cx="16" cy="12" r="4.500" fill="#f6b8bc" stroke="#7d8294" stroke-width="1.500"/><path d="M19 16l4 6" stroke="#8fa0b4" stroke-width="3"/>',
  palette: '<path d="M2 1h20v15H2z" fill="#fff" stroke="#5e6272"/><path d="M4 3h7v4H4zM4 9h7v5H4z" fill="#d4dc8c" stroke="#444"/><path d="M14 3h6v5h-6zM14 10h6v5h-6z" fill="#b9c9dc" stroke="#444"/><path d="M2 20h8" stroke="#1b1bb0" stroke-width="3"/><path d="M8 15l8 5-8 5z" fill="#1b1bb0"/>',
  customProps: '<path d="M3 9h18v14H3z" fill="#f8f8f4" stroke="#6b6d78" stroke-width="1.500"/><path d="M6 14h12M6 18h12" stroke="#8b8d98" stroke-width="1.500"/><path d="M6 7l7-5 10 2-4 5-5-1-2 3z" fill="#e9b95a" stroke="#6e4c12"/>',
  tag: '<path d="M14 2l7 1 2 7-11 12-9-3 0-7z" fill="url(#gold)" stroke="#9a6c06" stroke-width="1.800"/><circle cx="18" cy="7" r="2" fill="#fff" stroke="#9a6c06"/><path d="M8 12l6 4M11 9l5 4M6 15l5 4" stroke="#b58a12" stroke-width="1.200"/>'
}
</script>

<style>
body {
  margin: 0;
}
</style>

<style scoped>
* {
  box-sizing: border-box;
}

.desktop {
  min-height: 100vh;
  display: flex;
  padding: 3px 8px 10px 9px;
  background: #cc0096;
  font-family: 'Open Sans', 'Noto Sans', sans-serif;
  font-size: 16px;
  line-height: 18px;
  color: #3c3d52;
}

.defs {
  position: absolute;
}

.window {
  flex: 1;
  min-width: 0;
  display: flex;
  flex-direction: column;
  background: #c7c8d4;
}

button {
  font: inherit;
  color: inherit;
  background: none;
  border: 0;
  padding: 0;
  cursor: pointer;
}

input {
  font: inherit;
  color: #26273a;
  background: none;
  border: 0;
  outline: 0;
  padding: 0;
  min-width: 0;
}

.icon {
  display: block;
  flex: none;
  width: 24px;
  height: 24px;
}

.caret {
  flex: none;
  border: 4px solid transparent;
  border-top: 5px solid #3f4052;
  border-bottom: 0;
}

/* Title bar */
.titlebar {
  display: flex;
  height: 42px;
  background: linear-gradient(#f2f3fd, #dddeea 50%, #c8cad8);
  border-bottom: 2px solid #686a7c;
  font-size: 15px;
}

.brand {
  display: flex;
  align-items: center;
  gap: 4px;
  width: 194px;
  padding-left: 4px;
  background: linear-gradient(#e4e4f2, #c4c5d6);
  border-right: 13px solid #686b8c;
}

.brand-cube {
  flex: none;
  width: 30px;
  height: 30px;
}

.cube-letter {
  font: bold 16px 'Liberation Sans', sans-serif;
  fill: #fff;
}

.brand-name {
  font: 25px 'Liberation Sans', sans-serif;
  color: #3f4048;
}

.brand-name b {
  color: #1c1c22;
}

.menu {
  display: flex;
  align-items: center;
  gap: 22px;
  width: 447px;
  padding-left: 13px;
  background: linear-gradient(#e6e6f3, #c3c4d5);
  border-right: 2px solid #77798c;
}

.quick {
  display: flex;
  align-items: center;
  gap: 10px;
  padding-left: 8px;
}

.tool {
  display: flex;
  align-items: center;
  gap: 10px;
}

.faded {
  opacity: 0.6;
}

.selected {
  gap: 0;
  height: 33px;
  border: 2px solid #71728a;
  border-radius: 6px;
}

.select-main {
  height: 100%;
  padding: 0 3px;
  background: #b4b4d0;
  border-right: 1px solid #71728a;
}

.select-drop {
  display: flex;
  padding: 0 3px;
}

.doc-title {
  flex: 1;
  align-self: center;
  margin: 0;
  text-align: center;
  font-size: 15px;
  font-weight: normal;
  white-space: nowrap;
}

.search {
  display: flex;
  align-items: center;
  align-self: center;
  width: 286px;
  height: 30px;
  background: linear-gradient(#d8dae4, #f6fbfe 50%, #eef3f8);
  border: 2px solid #83869a;
  border-radius: 15px;
}

.search-icon {
  flex: none;
  width: 32px;
  height: 32px;
}

.search input {
  flex: 1;
  padding-left: 4px;
}

.search .caret {
  margin-left: -4px;
}

.window-controls {
  display: flex;
  align-items: center;
  gap: 11px;
  padding: 0 8px 0 12px;
}

.window-controls .help {
  font: bold 22px 'Liberation Sans', sans-serif;
  color: #85879a;
}

.window-controls .caret {
  display: block;
}

/* Ribbon */
.ribbon {
  position: relative;
  display: flex;
  height: 107px;
  background: linear-gradient(#fafeff, #f1f1fb 45%, #d2d3e0);
  border-bottom: 3px solid #65687a;
  font-size: 15px;
}

.group {
  display: flex;
  border-right: 1px solid #c6c7d4;
}

.boss {
  width: 374px;
  padding-left: 8px;
}

.cut {
  width: 371px;
  padding-left: 7px;
}

.applied {
  width: 296px;
}

.reference {
  width: 154px;
}

.instant {
  padding: 3px 4px;
  border: 0;
}

.large {
  display: flex;
  flex-direction: column;
  align-items: center;
  padding-top: 20px;
  line-height: 19px;
}

.boss .large {
  width: 86px;
}

.cut .large {
  width: 70px;
}

.applied .large {
  width: 56px;
}

.reference .large {
  flex: 1;
}

.reference .large:first-child {
  flex: none;
  width: 92px;
}

.large.dropdown {
  padding: 10px 0 8px;
}

.large.dropdown .caret {
  margin-top: auto;
}

.large.active {
  width: 84px;
  padding-top: 15px;
  background: linear-gradient(#c9c9e4, #b9b9da);
  border: 2px solid #83859c;
  border-radius: 6px;
}

.column {
  display: flex;
  flex-direction: column;
  justify-content: space-around;
  padding: 1px 0 0;
}

.boss .column {
  padding-left: 3px;
}

.cut .column {
  padding-left: 9px;
}

.applied .column {
  width: 86px;
  padding-left: 8px;
}

.small {
  display: flex;
  align-items: center;
  gap: 8px;
  white-space: nowrap;
}

.watermark {
  width: 104px;
  height: 100px;
  margin: 2px 8px 0 auto;
}

.watermark path {
  fill: none;
  stroke: #dcdee7;
  stroke-width: 7;
}

/* Workspace */
.workspace {
  flex: 1;
  display: flex;
  padding-right: 6px;
  background: #777989;
}

.main {
  flex: 1;
  min-width: 0;
  display: flex;
  flex-direction: column;
  background: #c5c6d2;
  border-right: 2px solid #2c2d3a;
}

.tabs {
  display: flex;
  align-items: flex-start;
  height: 33px;
}

.tabs button {
  height: 28px;
  padding: 0 10px;
  background: linear-gradient(#c3c4d0, #b3b4c4);
  border: solid #606274;
  border-width: 0 2px 2px 0;
  color: #5c5d6c;
  font: 18px 'Liberation Sans', sans-serif;
}

.tabs .active {
  height: 32px;
  margin-top: -3px;
  padding: 0 12px;
  background: #e9eaf3;
  color: #3a3b48;
  font-weight: bold;
  font-size: 17px;
  z-index: 1;
}

.body {
  flex: 1;
  display: flex;
}

.panel {
  display: flex;
  flex-direction: column;
  flex: none;
  width: 280px;
  padding-right: 3px;
  background: #d8d8e6;
  border-top: 2px solid #a1a3b2;
  border-right: 2px solid #65687a;
}

.panel-tabs {
  display: flex;
  align-items: flex-end;
  gap: 2px;
  height: 37px;
  border-bottom: 2px solid #83869a;
}

.panel-tabs button {
  display: flex;
  justify-content: center;
  align-items: center;
  width: 39px;
  height: 30px;
  background: linear-gradient(#b7b9cb, #a9abbd);
  border: 1px solid #83869a;
  border-bottom: 0;
  border-radius: 5px 5px 0 0;
}

.panel-tabs .active {
  height: 32px;
  margin-bottom: -2px;
  background: #eef0f6;
}

.panel-tabs .more {
  width: 14px;
  margin: 0 6px 0 auto;
  background: none;
  border: 0;
}

.more svg {
  width: 14px;
  height: 14px;
}

.filter {
  display: flex;
  align-items: center;
  height: 26px;
  margin: 2px 0 2px 2px;
  padding-left: 8px;
  background: linear-gradient(#dcdeea, #fff 60%, #f1f3f9);
  border: 2px solid #888b9e;
  border-radius: 13px;
}

.filter .icon {
  width: 20px;
  height: 20px;
}

.filter input {
  flex: 1;
}

.tree {
  flex: 1;
  background: #e3e5ee;
  color: #22232c;
}

.root {
  display: flex;
  align-items: center;
  gap: 7px;
  height: 29px;
  padding-left: 3px;
  white-space: nowrap;
}

.tree ul {
  margin: 0;
  padding: 0;
  list-style: none;
  border-bottom: 3px solid #2f6cb0;
}

.tree li {
  display: flex;
  align-items: center;
  height: 26px;
}

.tree li > .icon {
  margin-right: 7px;
}

/* dotted connector lines */
.branch {
  display: flex;
  align-items: center;
  align-self: stretch;
  width: 24px;
  margin-left: 6px;
  padding-left: 3px;
  background:
    repeating-linear-gradient(#8e909e 0 1px, transparent 1px 2px) 9px 0 / 1px 100% no-repeat,
    repeating-linear-gradient(90deg, #8e909e 0 1px, transparent 1px 2px) 10px 13px / 12px 1px no-repeat;
}

.branch button {
  width: 13px;
  height: 13px;
  background:
    linear-gradient(#333, #333) center / 7px 1px no-repeat,
    linear-gradient(#333, #333) center / 1px 7px no-repeat,
    #f4f5f9;
  border: 1px solid #85889a;
}

.scrollbar {
  display: flex;
  align-items: center;
  height: 25px;
  margin-bottom: 4px;
  padding: 0 5px;
  background: #f0f1f3;
}

.arrow {
  border: 5px solid transparent;
}

.arrow.left {
  border-left: 0;
  border-right: 6px solid #3f4048;
}

.arrow.right {
  border-right: 0;
  border-left: 6px solid #3f4048;
}

.track {
  flex: 1;
  padding: 0 14px;
}

.thumb {
  display: flex;
  justify-content: center;
  align-items: center;
  gap: 3px;
  width: 42%;
  height: 21px;
  background: linear-gradient(#f3f3f4, #d2d3d7);
  border: 1px solid #94959c;
  border-radius: 2px;
}

.thumb i {
  width: 2px;
  height: 9px;
  background: #74757e;
}

.viewport {
  position: relative;
  flex: 1;
  min-width: 0;
  background: #c7c8d4;
}

.model {
  position: absolute;
  inset: 0;
  width: 100%;
  height: 100%;
}

.edge {
  stroke: #1d1d29;
  stroke-width: 2.4;
  stroke-linejoin: round;
}

/* Heads-up toolbar floats over the graphics area */
.view-tools {
  position: absolute;
  top: -26px;
  left: 671px;
  display: flex;
  gap: 9px;
}

.view-tools button {
  display: flex;
  align-items: center;
  gap: 7px;
}

.view-tools .caret {
  border-top-color: #5c5e70;
}

.doc-controls {
  position: absolute;
  top: -24px;
  right: 10px;
  display: flex;
  gap: 10px;
}

.task-pane {
  position: absolute;
  top: 53px;
  right: -8px;
  display: flex;
  flex-direction: column;
}

.task-pane button {
  display: flex;
  align-items: center;
  justify-content: center;
  width: 35px;
  height: 35px;
  background: linear-gradient(#c5c6d4, #b3b5c5);
  border: 2px solid #858798;
  border-right: 0;
  border-radius: 6px 0 0 6px;
}

.task-pane .active {
  background: #f0f0f8;
}

.splitter {
  position: absolute;
  top: 605px;
  left: 0;
  display: flex;
  flex-direction: column;
  align-items: center;
  justify-content: space-around;
  width: 12px;
  height: 43px;
  background: #dcdde8;
  border: 2px solid #74778a;
  border-left: 0;
  border-radius: 0 4px 4px 0;
}

.splitter i {
  border: 3px solid transparent;
  border-left: 0;
  border-right: 5px solid #55586c;
}

.triad {
  position: absolute;
  left: 16px;
  bottom: 58px;
  width: 80px;
  height: 80px;
}

.triad text {
  font: 16px 'Liberation Sans', sans-serif;
}

/* Sheet tabs */
.sheet-bar {
  display: flex;
  align-items: flex-start;
  height: 23px;
  margin-right: 6px;
  padding-left: 3px;
  background: #e3e4ef;
  border-top: 2px solid #2b2c38;
  border-right: 2px solid #2c2d3a;
  box-shadow: 6px 0 0 #777989;
}

.sheet-nav {
  display: flex;
  gap: 1px;
  height: 21px;
  margin-right: 2px;
}

.sheet-nav button {
  width: 23px;
  background: #b4b5c3;
  border: 1px solid #9a9cac;
}

.sheet-nav svg {
  display: block;
  width: 16px;
  height: 16px;
  margin: 0 auto;
  fill: #8e90a2;
}

.sheet {
  height: 20px;
  padding: 0 13px;
  background: #bdbecd;
  border: solid #5a5c6d;
  border-width: 0 2px 2px 0;
  font: 17px 'Liberation Sans', sans-serif;
  line-height: 18px;
  color: #2f3040;
}

.sheet + .sheet {
  padding-right: 20px;
}

.sheet.active {
  background: #dfe2ef;
  border-left-width: 2px;
  font-weight: bold;
  color: #1c1d26;
}

/* Status bar */
.status {
  display: flex;
  align-items: center;
  height: 30px;
  padding: 0 20px 0 3px;
  background: linear-gradient(#dadce8, #c2c4d2);
  border-top: 2px solid #7f8192;
  border-bottom: 2px solid #5c5e6e;
  color: #1f202c;
  font-size: 17px;
}

.edition {
  flex: 1;
}

.mode {
  padding: 0 6px;
  border-left: 1px solid #e6e7ef;
  border-right: 1px solid #e6e7ef;
}

.cell {
  width: 12px;
  height: 18px;
  border-right: 1px solid #e6e7ef;
}

.tag {
  margin-left: 108px;
}
</style>
